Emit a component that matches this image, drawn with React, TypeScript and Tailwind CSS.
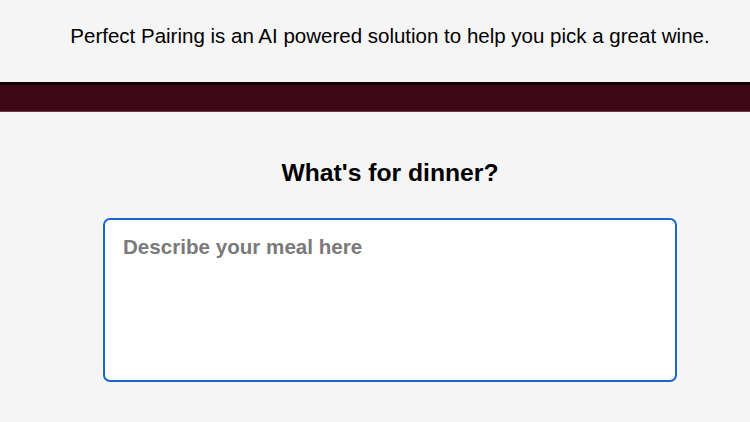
import React from "react";

export default function App() {
  return (
    <div className="min-h-screen w-full bg-[#f5f5f5] pl-[30px] font-['Liberation_Sans',Arial,sans-serif] text-black">
      <header className="h-[82px] -ml-[30px] pl-[30px] flex items-start justify-center pt-[23px]">
        <p className="text-[20.5px] leading-[26px]">
          Perfect Pairing is an AI powered solution to help you pick a great wine.
        </p>
      </header>

      <div className="h-[30px] -ml-[30px] bg-[#3f0718] border-t-[3px] border-t-[#0f0206] border-b border-b-[#6a3a48]" />

      <main className="flex flex-col items-center pt-[46px]">
        <h2 className="text-[24.7px] leading-[30px] font-bold">What's for dinner?</h2>
        <textarea
          autoFocus
          placeholder="Describe your meal here"
          className="mt-[30px] w-[574px] h-[164px] resize-none rounded-[7px] border-2 border-[#1a66cc] bg-white px-[18px] py-[14px] text-[20.6px] font-bold leading-[26px] outline-none placeholder:text-[#7a7a7a]"
        />
      </main>
    </div>
  );
}
